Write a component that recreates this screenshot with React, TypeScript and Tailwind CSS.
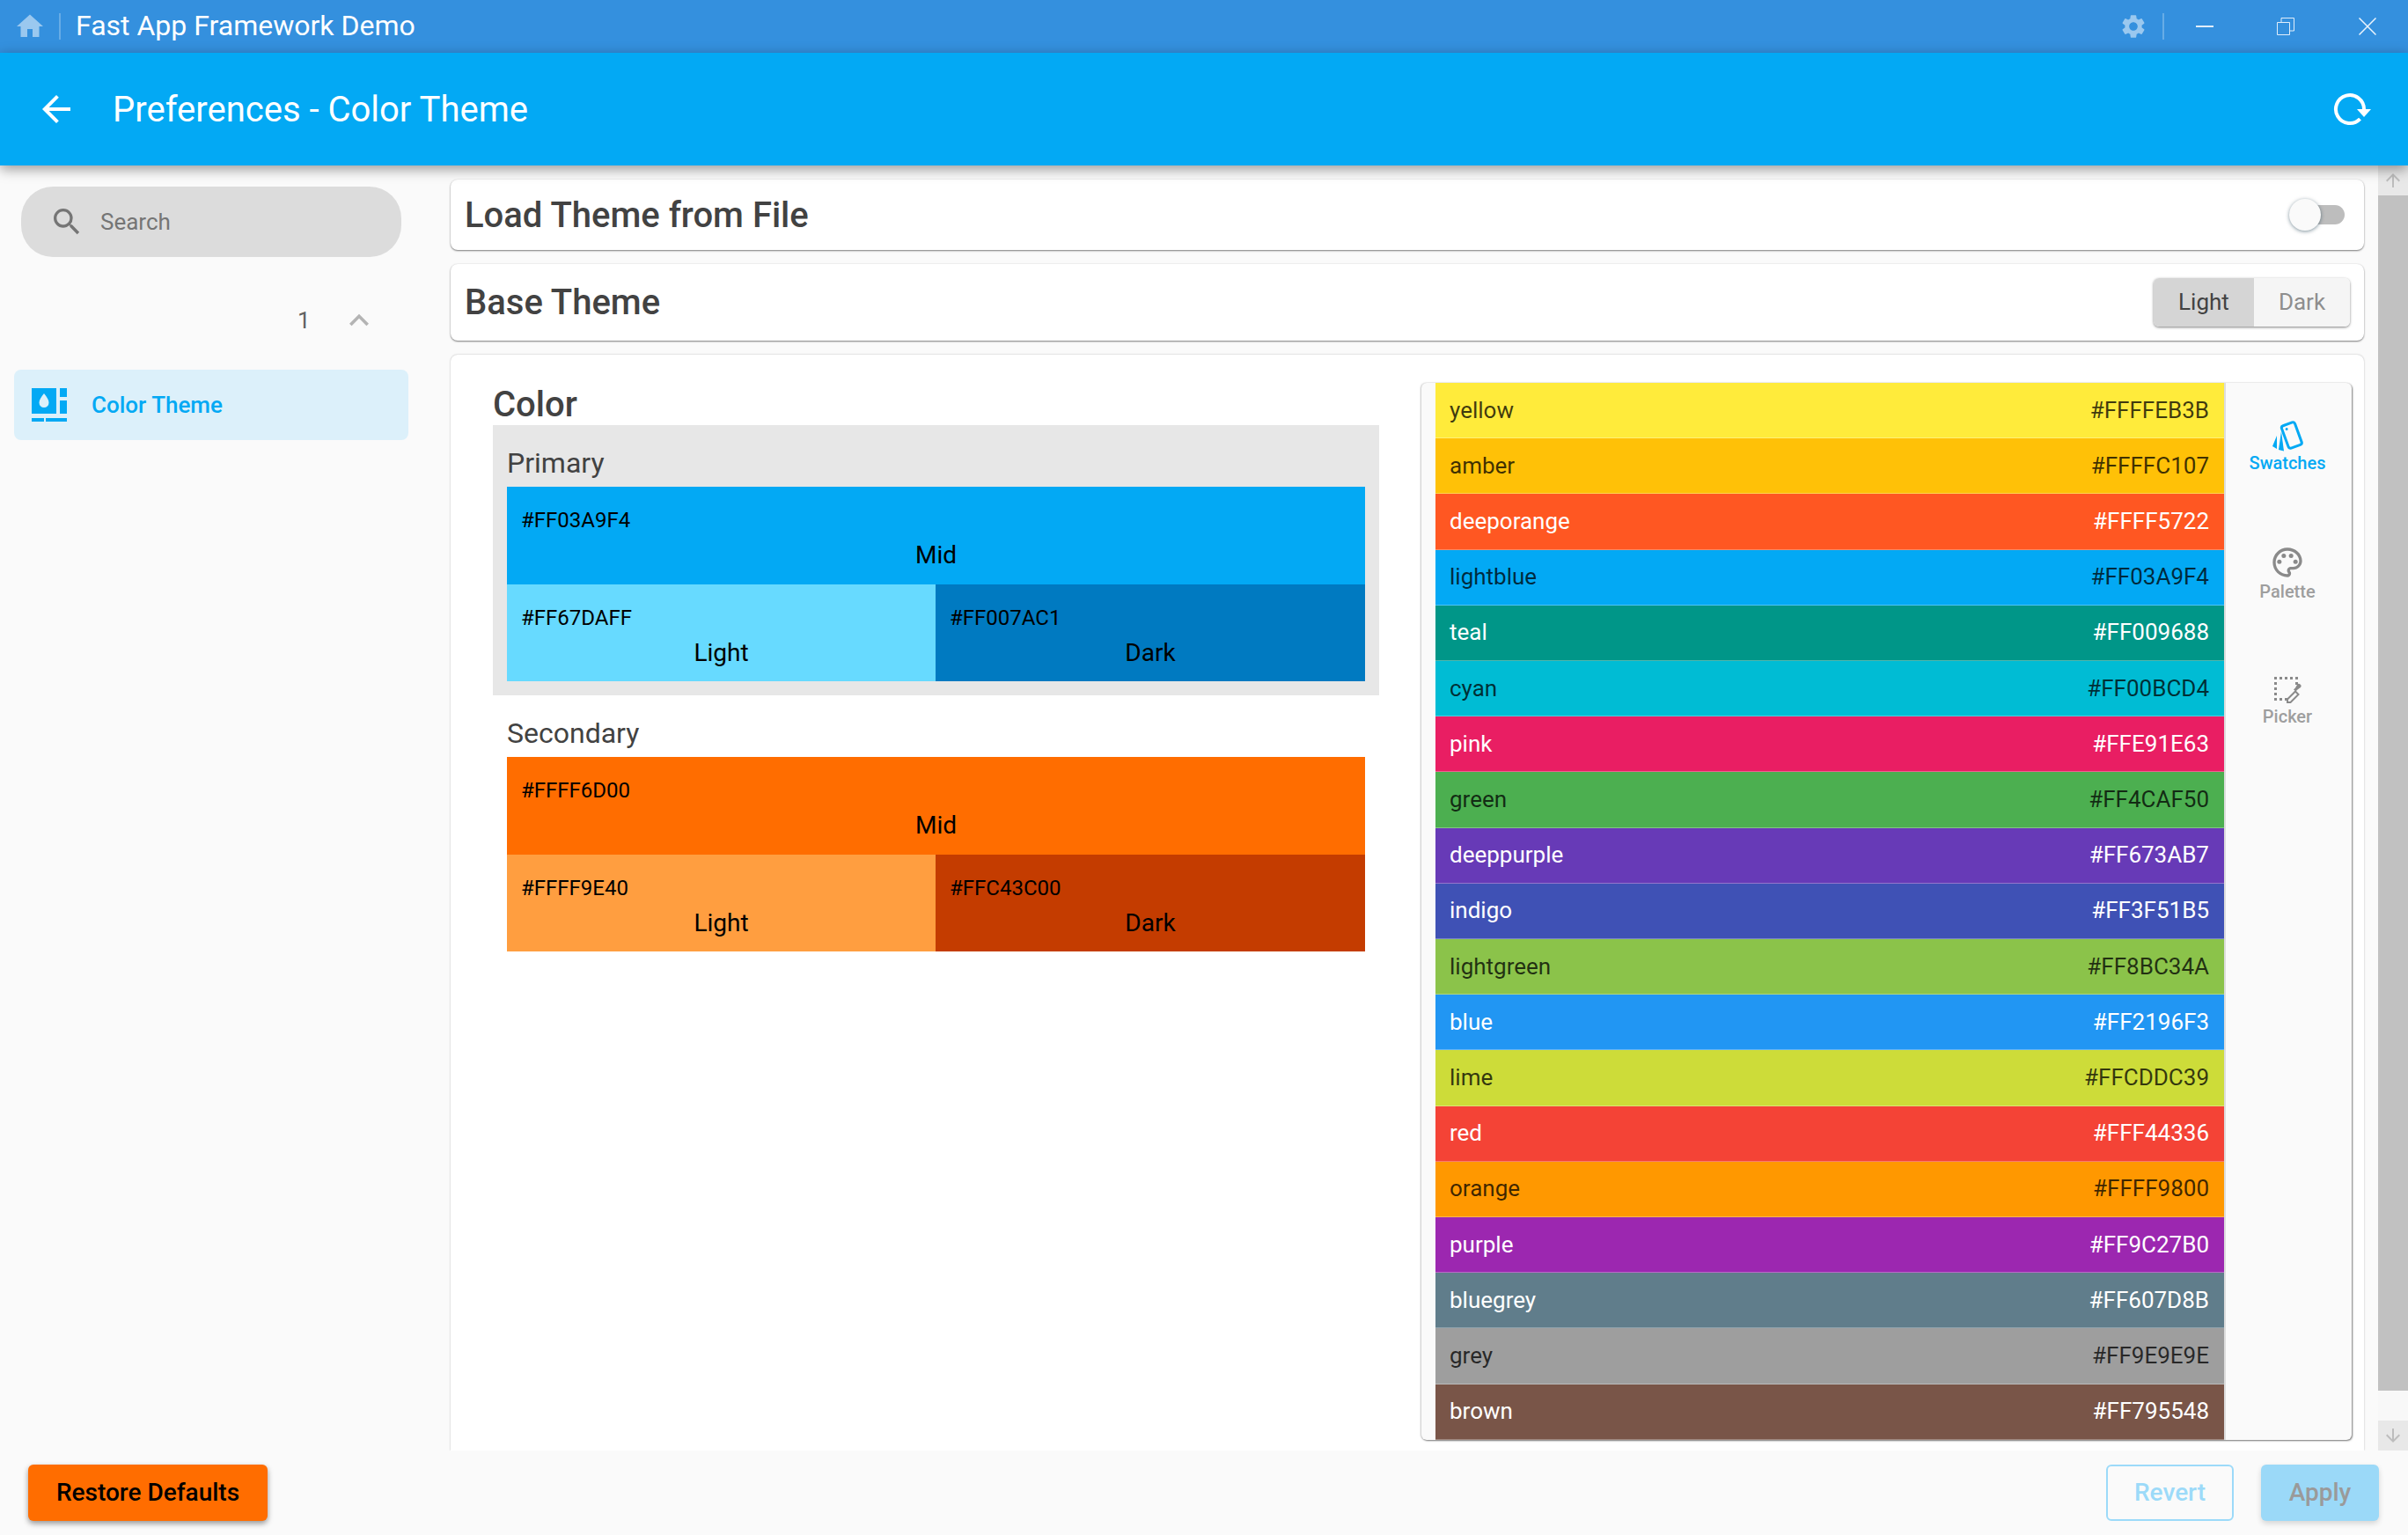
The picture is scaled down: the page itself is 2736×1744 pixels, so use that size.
import { MdArrowBack, MdArrowDownward, MdArrowUpward, MdHome, MdKeyboardArrowUp, MdOutlinePalette, MdSearch, MdSettings } from "react-icons/md"

const swatches = [
  { name: "yellow", code: "#FFFFEB3B", bg: "bg-[#ffeb3b]", text: "text-black/75" },
  { name: "amber", code: "#FFFFC107", bg: "bg-[#ffc107]", text: "text-black/75" },
  { name: "deeporange", code: "#FFFF5722", bg: "bg-[#ff5722]", text: "text-white" },
  { name: "lightblue", code: "#FF03A9F4", bg: "bg-[#03a9f4]", text: "text-black/75" },
  { name: "teal", code: "#FF009688", bg: "bg-[#009688]", text: "text-white" },
  { name: "cyan", code: "#FF00BCD4", bg: "bg-[#00bcd4]", text: "text-black/75" },
  { name: "pink", code: "#FFE91E63", bg: "bg-[#e91e63]", text: "text-white" },
  { name: "green", code: "#FF4CAF50", bg: "bg-[#4caf50]", text: "text-black/75" },
  { name: "deeppurple", code: "#FF673AB7", bg: "bg-[#673ab7]", text: "text-white" },
  { name: "indigo", code: "#FF3F51B5", bg: "bg-[#3f51b5]", text: "text-white" },
  { name: "lightgreen", code: "#FF8BC34A", bg: "bg-[#8bc34a]", text: "text-black/75" },
  { name: "blue", code: "#FF2196F3", bg: "bg-[#2196f3]", text: "text-white" },
  { name: "lime", code: "#FFCDDC39", bg: "bg-[#cddc39]", text: "text-black/75" },
  { name: "red", code: "#FFF44336", bg: "bg-[#f44336]", text: "text-white" },
  { name: "orange", code: "#FFFF9800", bg: "bg-[#ff9800]", text: "text-black/75" },
  { name: "purple", code: "#FF9C27B0", bg: "bg-[#9c27b0]", text: "text-white" },
  { name: "bluegrey", code: "#FF607D8B", bg: "bg-[#607d8b]", text: "text-white" },
  { name: "grey", code: "#FF9E9E9E", bg: "bg-[#9e9e9e]", text: "text-black/75" },
  { name: "brown", code: "#FF795548", bg: "bg-[#795548]", text: "text-white" },
]

function ColorThemeIcon() {
  return (
    <svg width="40" height="38" viewBox="0 0 40 38" className="shrink-0 text-[#03a9f4]" fill="currentColor">
      <rect x="0" y="0" width="28" height="29" />
      <rect x="32" y="0" width="8" height="10" />
      <rect x="32" y="14" width="8" height="15" />
      <rect x="0" y="34" width="14" height="4" />
      <rect x="16" y="34" width="24" height="4" />
      <path d="M14 6c3 4 5.500 7 5.500 10.500a5.500 5.500 0 0 1-11 0C8.500 13 11 10 14 6z" fill="#dcf0fa" />
    </svg>
  )
}

function RefreshIcon() {
  return (
    <svg width="44" height="40" viewBox="0 0 44 40" className="text-white">
      <path d="M31.500 31.200A16 16 0 1 1 36 20" fill="none" stroke="currentColor" strokeWidth="4" />
      <path d="M28 20h16l-8 9z" fill="currentColor" />
    </svg>
  )
}

function SwatchesIcon() {
  return (
    <svg width="36" height="36" viewBox="0 0 36 36" className="text-[#03a9f4]">
      <g transform="rotate(-20 23 18)">
        <rect x="15" y="4" width="16" height="27" rx="2.500" fill="none" stroke="currentColor" strokeWidth="3" />
        <circle cx="20" cy="9" r="1.500" fill="currentColor" />
      </g>
      <path d="M6 18L1 30l5 3z" fill="currentColor" />
      <path d="M11 13L8 34l6 1.500z" fill="currentColor" />
    </svg>
  )
}

function PickerIcon() {
  return (
    <svg width="34" height="34" viewBox="0 0 34 34" className="text-[#8a8a8a]" fill="currentColor">
      <path d="M2 2h3v3H2zM8 2h3v3H8zM14 2h3v3h-3zM20 2h3v3h-3zM26 2h3v3h-3zM2 8h3v3H2zM26 8h3v3h-3zM2 14h3v3H2zM2 20h3v3H2zM2 26h3v3H2zM8 26h3v3H8zM14 26h3v3h-3z" />
      <path d="M17 31v-3.500l9-9 3.500 3.500-9 9z" fill="none" stroke="currentColor" strokeWidth="2" />
      <path d="M24 16.500l2-2 2-3.500a2.500 2.500 0 0 1 4 3l-3.500 2.500-2 2z" />
    </svg>
  )
}

function Tile({ code, label, bg, className }: { code: string; label: string; bg: string; className: string }) {
  return (
    <div className={`flex flex-col text-black ${bg} ${className}`}>
      <div className="pl-4 pt-[24px] text-[24px] leading-[28px]">{code}</div>
      <div className="pt-[10px] text-center text-[28px] leading-[32px]">{label}</div>
    </div>
  )
}

function ColorGroup({ title, mid, light, dark, className }: {
  title: string
  mid: [string, string]
  light: [string, string]
  dark: [string, string]
  className: string
}) {
  return (
    <div className={`px-4 pb-4 ${className}`}>
      <div className="flex h-[70px] items-end pb-[7px] text-[32px] leading-[40px] text-[#424242]">{title}</div>
      <Tile code={mid[0]} label="Mid" bg={mid[1]} className="h-[111px]" />
      <div className="flex">
        <Tile code={light[0]} label="Light" bg={light[1]} className="h-[110px] w-[487px]" />
        <Tile code={dark[0]} label="Dark" bg={dark[1]} className="h-[110px] flex-1" />
      </div>
    </div>
  )
}

export default function App() {
  return (
    <div className="flex h-screen w-full flex-col overflow-hidden bg-[#fafafa] font-['Roboto',sans-serif]">
      {/* window title bar */}
      <div className="flex h-[60px] shrink-0 items-center bg-[#3490de] text-white">
        <MdHome className="ml-[16px] h-[36px] w-[36px] text-white/50" />
        <div className="ml-[15px] h-[30px] w-[2px] bg-white/25" />
        <div className="ml-[17px] flex-1 pb-[2px] text-[32px] leading-[40px]">Fast App Framework Demo</div>
        <MdSettings className="mr-[-2px] h-[32px] w-[32px] text-white/50" />
        <div className="ml-[19px] h-[30px] w-[2px] bg-white/25" />
        <div className="ml-[36px] h-[2px] w-[20px] bg-white/85" />
        <svg width="20" height="20" viewBox="0 0 20 20" className="ml-[72px] text-white/85" fill="none" stroke="currentColor">
          <path d="M.5 5.500h14v14H.5zM5 5V.5h14.500V15H15" />
        </svg>
        <svg width="20" height="20" viewBox="0 0 20 20" className="ml-[73px] mr-[36px] text-white/90" fill="none" stroke="currentColor" strokeWidth="1.500">
          <path d="M.5.5l19 19M19.500.5l-19 19" />
        </svg>
      </div>

      {/* app bar */}
      <div className="relative z-10 flex h-[128px] shrink-0 items-center bg-[#03a9f4] pl-[40px] pr-[42px] text-white shadow-[0_4px_14px_rgba(0,0,0,0.4)]">
        <MdArrowBack className="h-[48px] w-[48px]" />
        <div className="ml-[40px] flex-1 pt-[2px] text-[40px] leading-[48px]">Preferences - Color Theme</div>
        <RefreshIcon />
      </div>

      <div className="flex min-h-0 flex-1">
        {/* sidebar */}
        <div className="flex w-[512px] shrink-0 flex-col pt-[24px]">
          <div className="ml-[24px] flex h-[80px] w-[432px] items-center rounded-[36px] bg-[#dcdcdc] pl-[32px] text-[#757575]">
            <MdSearch className="h-[40px] w-[40px]" />
            <span className="ml-[18px] text-[26px]">Search</span>
          </div>
          <div className="mt-[49px] flex h-[46px] items-center text-[#616161]">
            <span className="ml-[338px] text-[26px]">1</span>
            <MdKeyboardArrowUp className="ml-[33px] h-[44px] w-[44px] text-[#b4b4b4]" />
          </div>
          <div className="ml-[16px] mt-[33px] flex h-[80px] w-[448px] items-center rounded-[8px] bg-[#dcf0fa] pl-[20px]">
            <ColorThemeIcon />
            <span className="ml-[28px] text-[26px] font-medium text-[#03a9f4]">Color Theme</span>
          </div>
        </div>

        {/* content */}
        <div className="flex min-w-0 flex-1 flex-col gap-4 pr-4 pt-4">
          <div className="flex h-[80px] shrink-0 items-center justify-between rounded-[8px] bg-white pl-4 pr-[22px] shadow-[0_1px_2px_rgba(0,0,0,0.5),0_0_2px_rgba(0,0,0,0.08)]">
            <div className="pt-[2px] text-[40px] font-medium leading-[48px] text-[#424242]">Load Theme from File</div>
            <div className="relative h-[22px] w-[60px] rounded-full bg-[#bdbdbd]">
              <div className="absolute left-[-3px] top-[-7px] h-[36px] w-[36px] rounded-full bg-[#fafafa] shadow-[0_1px_4px_rgba(0,40,60,0.5)]" />
            </div>
          </div>

          <div className="flex h-[87px] shrink-0 items-center justify-between rounded-[8px] bg-white pl-4 pr-4 shadow-[0_1px_2px_rgba(0,0,0,0.5),0_0_2px_rgba(0,0,0,0.08)]">
            <div className="text-[40px] font-medium leading-[48px] text-[#424242]">Base Theme</div>
            <div className="flex h-[55px] overflow-hidden rounded-[6px] text-[26px] shadow-[0_1px_3px_rgba(0,0,0,0.5)]">
              <div className="flex w-[114px] items-center justify-center bg-[#d5d5d5] text-[#424242]">Light</div>
              <div className="flex w-[109px] items-center justify-center bg-[#f5f5f5] text-[#8e8e8e]">Dark</div>
            </div>
          </div>

          <div className="flex min-h-0 flex-1 rounded-t-[8px] bg-white pb-3 pl-[48px] pr-[14px] pt-[32px] shadow-[0_0_2px_rgba(0,0,0,0.3)]">
            <div className="w-[1007px] shrink-0">
              <div className="h-[48px] text-[40px] font-medium leading-[50px] text-[#424242]">Color</div>
              <ColorGroup
                title="Primary"
                mid={["#FF03A9F4", "bg-[#03a9f4]"]}
                light={["#FF67DAFF", "bg-[#67daff]"]}
                dark={["#FF007AC1", "bg-[#007ac1]"]}
                className="bg-[#e7e7e7]"
              />
              <ColorGroup
                title="Secondary"
                mid={["#FFFF6D00", "bg-[#ff6d00]"]}
                light={["#FFFF9E40", "bg-[#ff9e40]"]}
                dark={["#FFC43C00", "bg-[#c43c00]"]}
                className=""
              />
            </div>

            <div className="ml-[48px] flex min-w-0 flex-1 rounded-[6px] bg-[#fafafa] pl-4 shadow-[1px_1px_2px_rgba(0,0,0,0.5),-1px_0_2px_rgba(0,0,0,0.2)]">
              <div className="flex w-[896px] shrink-0 flex-col">
                {swatches.map((s) => (
                  <div key={s.name} className={`flex flex-1 items-center justify-between border-b border-white/30 pl-4 pr-[17px] text-[26px] ${s.bg} ${s.text}`}>
                    <span>{s.name}</span>
                    <span>{s.code}</span>
                  </div>
                ))}
              </div>
              <div className="flex flex-1 flex-col border-l-2 border-[#dddddd] pr-[3px]">
                <div className="flex h-[144px] flex-col items-center justify-center pt-[2px] text-[20px] font-medium leading-[26px] text-[#03a9f4]">
                  <SwatchesIcon />
                  <span>Swatches</span>
                </div>
                <div className="flex h-[144px] flex-col items-center justify-center pt-[1px] text-[20px] font-medium leading-[26px] text-[#9e9e9e]">
                  <MdOutlinePalette className="h-[40px] w-[40px] text-[#8a8a8a]" />
                  <span>Palette</span>
                </div>
                <div className="flex h-[144px] flex-col items-center justify-center pt-[3px] text-[20px] font-medium leading-[26px] text-[#9e9e9e]">
                  <PickerIcon />
                  <span>Picker</span>
                </div>
              </div>
            </div>
          </div>
        </div>

        {/* scrollbar */}
        <div className="flex w-[34px] shrink-0 flex-col bg-[#f8f8f8]">
          <div className="flex h-[34px] items-center justify-center bg-[#e8e8e8]">
            <MdArrowUpward className="h-[24px] w-[24px] text-[#bdbdbd]" />
          </div>
          <div className="flex-1 bg-[#c1c1c1]" />
          <div className="h-[34px]" />
          <div className="flex h-[34px] items-center justify-center bg-[#e8e8e8]">
            <MdArrowDownward className="h-[24px] w-[24px] text-[#bdbdbd]" />
          </div>
        </div>
      </div>

      {/* bottom actions */}
      <div className="flex h-[96px] shrink-0 items-center bg-[#fafafa] pl-[32px] pr-[33px]">
        <div className="flex h-[64px] w-[272px] items-center justify-center rounded-[6px] bg-[#ff6d00] text-[28px] font-medium text-black shadow-[0_3px_6px_rgba(0,0,0,0.4)]">
          Restore Defaults
        </div>
        <div className="ml-auto flex h-[64px] w-[145px] items-center justify-center rounded-[6px] border-2 border-[#9cdaf9] text-[28px] font-medium text-[#9cdaf9]">
          Revert
        </div>
        <div className="ml-[31px] flex h-[64px] w-[134px] items-center justify-center rounded-[6px] bg-[#9bd9f8] text-[28px] font-medium text-[#9a9a9a] shadow-[0_3px_6px_rgba(0,0,0,0.15)]">
          Apply
        </div>
      </div>
    </div>
  )
}
